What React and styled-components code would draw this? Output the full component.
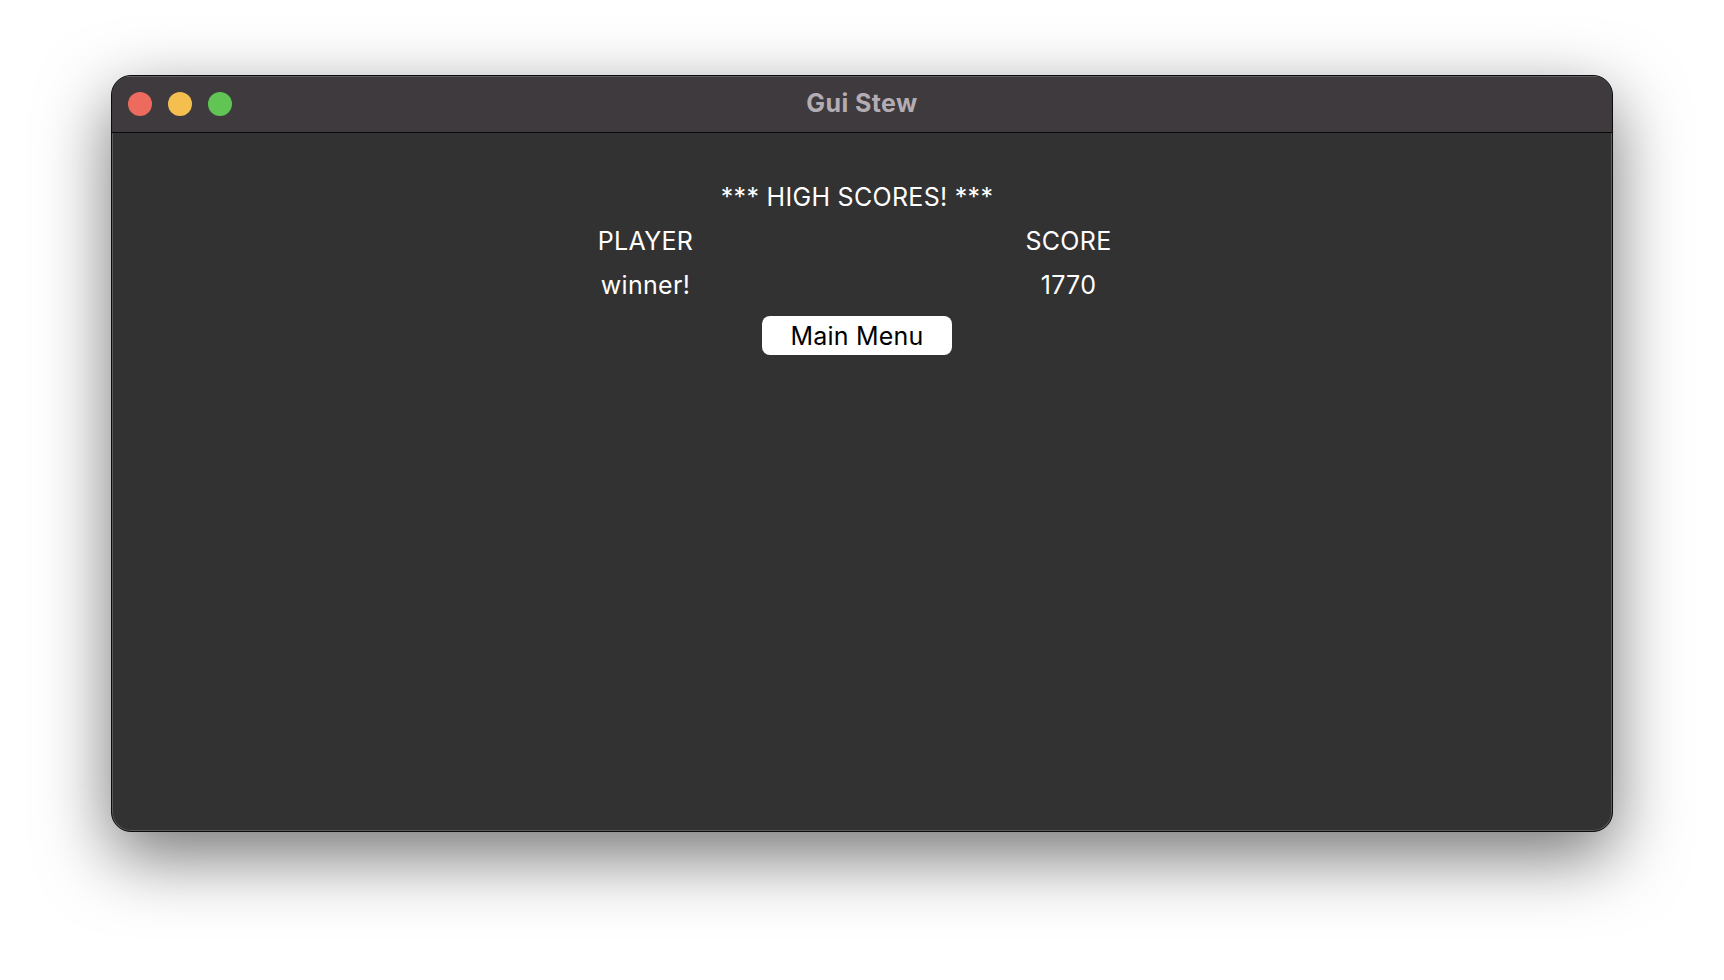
import React from 'react';
import styled, { createGlobalStyle } from 'styled-components';

const GlobalStyle = createGlobalStyle`
  html, body {
    margin: 0;
    padding: 0;
    background: #ffffff;
  }
  body {
    font-family: Inter, "Liberation Sans", Arial, sans-serif;
  }
`;

const Desktop = styled.div`
  width: 1724px;
  height: 980px;
  padding-top: 75px;
  box-sizing: border-box;
  overflow: hidden;
`;

const Window = styled.div`
  width: 1502px;
  height: 757px;
  margin: 0 auto;
  box-sizing: border-box;
  border-radius: 20px;
  border: 1px solid #0c0c0c;
  background: #323232;
  display: flex;
  flex-direction: column;
  overflow: hidden;
  box-shadow: 0 24px 70px rgba(0, 0, 0, 0.55), inset 0 0 0 1px rgba(255, 255, 255, 0.2);
`;

const TitleBar = styled.div`
  height: 56px;
  flex-shrink: 0;
  background: #3e3a3e;
  border-bottom: 1px solid #0a0a0a;
  display: grid;
  grid-template-columns: 1fr auto 1fr;
  align-items: center;
  padding: 0 16px;
  box-shadow: inset 0 1px 0 rgba(255, 255, 255, 0.18);
`;

const Lights = styled.div`
  display: flex;
  gap: 16px;
`;

const Light = styled.span`
  width: 24px;
  height: 24px;
  border-radius: 50%;
  background: ${p => p.color};
`;

const WindowTitle = styled.div`
  font-family: Inter, "Liberation Sans", Arial, sans-serif;
  font-weight: 700;
  font-size: 25px;
  color: #b3adb3;
  letter-spacing: 0.4px;
  margin-bottom: 3px;
`;

const Content = styled.div`
  flex: 1;
  display: flex;
  flex-direction: column;
  align-items: center;
  padding: 42px 10px 0 0;
  color: #ffffff;
  font-size: 25px;
  letter-spacing: 0.3px;
`;

const Heading = styled.div`
  line-height: 44px;
`;

const ScoreTable = styled.div`
  display: grid;
  grid-template-columns: 423px 423px;
  line-height: 44px;
  text-align: center;
`;

const MenuButton = styled.button`
  margin-top: 9px;
  width: 190px;
  height: 39px;
  border: none;
  border-radius: 8px;
  background: #ffffff;
  color: #000000;
  font-family: Inter, "Liberation Sans", Arial, sans-serif;
  font-size: 25px;
  letter-spacing: 0.2px;
  padding: 0;
  cursor: pointer;
`;

const scores = [{ player: 'winner!', score: 1770 }];

export default function App() {
  return (
    <>
      <GlobalStyle />
      <Desktop>
        <Window>
          <TitleBar>
            <Lights>
              <Light color="#ed6a5e" />
              <Light color="#f5bf4f" />
              <Light color="#61c554" />
            </Lights>
            <WindowTitle>Gui Stew</WindowTitle>
            <div />
          </TitleBar>
          <Content>
            <Heading>*** HIGH SCORES! ***</Heading>
            <ScoreTable>
              <div>PLAYER</div>
              <div>SCORE</div>
              {scores.map(s => (
                <React.Fragment key={s.player}>
                  <div>{s.player}</div>
                  <div>{s.score}</div>
                </React.Fragment>
              ))}
            </ScoreTable>
            <MenuButton>Main Menu</MenuButton>
          </Content>
        </Window>
      </Desktop>
    </>
  );
}
